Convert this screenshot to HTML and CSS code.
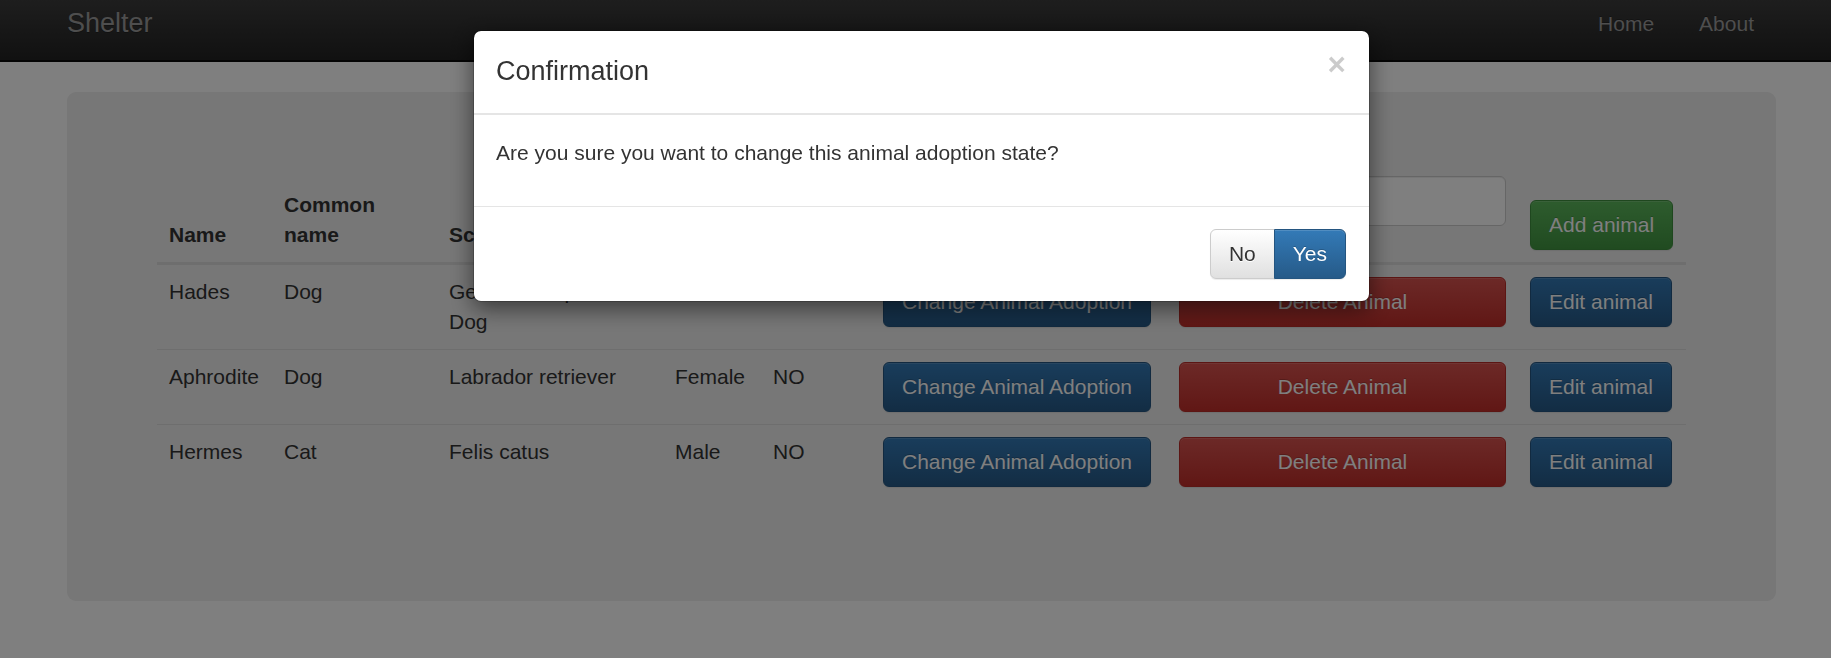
FILE: index.html
```html
<!DOCTYPE html>
<html lang="en">
<head>
<meta charset="utf-8">
<title>Shelter</title>
<link rel="stylesheet" href="styles.css">
</head>
<body>
<nav class="navbar">
  <div class="navbar-inner">
    <a class="brand" href="#">Shelter</a>
    <ul class="nav">
      <li><a href="#">Home</a></li>
      <li><a href="#">About</a></li>
    </ul>
  </div>
</nav>
<main class="container">
  <section class="jumbotron">
    <table class="animals">
      <colgroup>
        <col class="w-name"><col class="w-common"><col class="w-sci"><col class="w-gender"><col class="w-adopted"><col class="w-change"><col class="w-delete"><col class="w-edit">
      </colgroup>
      <thead>
        <tr>
          <th>Name</th>
          <th>Common name</th>
          <th>Scientific name</th>
          <th>Gender</th>
          <th>Adopted</th>
          <th></th>
          <th><input class="search" type="text" placeholder="Search"></th>
          <th><button class="btn btn-success">Add animal</button></th>
        </tr>
      </thead>
      <tbody>
        <tr>
          <td>Hades</td>
          <td>Dog</td>
          <td>German shepherd Dog</td>
          <td>Male</td>
          <td>NO</td>
          <td><button class="btn btn-primary">Change Animal Adoption</button></td>
          <td><button class="btn btn-danger btn-block">Delete Animal</button></td>
          <td><button class="btn btn-primary">Edit animal</button></td>
        </tr>
        <tr>
          <td>Aphrodite</td>
          <td>Dog</td>
          <td>Labrador retriever</td>
          <td>Female</td>
          <td>NO</td>
          <td><button class="btn btn-primary">Change Animal Adoption</button></td>
          <td><button class="btn btn-danger btn-block">Delete Animal</button></td>
          <td><button class="btn btn-primary">Edit animal</button></td>
        </tr>
        <tr>
          <td>Hermes</td>
          <td>Cat</td>
          <td>Felis catus</td>
          <td>Male</td>
          <td>NO</td>
          <td><button class="btn btn-primary">Change Animal Adoption</button></td>
          <td><button class="btn btn-danger btn-block">Delete Animal</button></td>
          <td><button class="btn btn-primary">Edit animal</button></td>
        </tr>
      </tbody>
    </table>
  </section>
</main>

<div class="backdrop"></div>
<div class="modal">
  <div class="modal-dialog">
    <div class="modal-content">
      <div class="modal-header">
        <h4 class="modal-title">Confirmation</h4>
        <button class="close" type="button">&times;</button>
      </div>
      <div class="modal-body">
        <p>Are you sure you want to change this animal adoption state?</p>
      </div>
      <div class="modal-footer">
        <div class="btn-group">
          <button class="btn btn-default">No</button>
          <button class="btn btn-primary">Yes</button>
        </div>
      </div>
    </div>
  </div>
</div>
</body>
</html>
```

FILE: styles.css
```css
* { box-sizing: border-box; }

html, body { margin: 0; padding: 0; }

body {
  font-family: "Liberation Sans", Arial, Helvetica, sans-serif;
  font-size: 21px;
  line-height: 30px;
  color: #333;
  background: #fff;
}

/* Navbar */
.navbar {
  height: 62px;
  background: linear-gradient(to bottom, #3c3c3c 0, #222 100%);
  border-bottom: 2px solid #080808;
  margin-bottom: 30px;
}
.navbar-inner {
  width: 1709px;
  margin-left: 67px;
  padding-top: 8px;
  display: flex;
  justify-content: space-between;
  align-items: flex-start;
}
.brand {
  font-size: 27px;
  line-height: 30px;
  color: #9d9d9d;
  text-decoration: none;
  text-shadow: 0 1px 0 rgba(0,0,0,.25);
}
.nav {
  list-style: none;
  margin: 0;
  padding: 0;
  display: flex;
}
.nav a {
  display: block;
  padding: 1px 22.5px 0;
  line-height: 30px;
  color: #9d9d9d;
  text-decoration: none;
  text-shadow: 0 -1px 0 rgba(0,0,0,.25);
}
.nav li:last-child a { padding-right: 22px; }

/* Page */
.container {
  width: 1709px;
  margin-left: 67px;
}
.jumbotron {
  background: #eee;
  border-radius: 9px;
  padding: 72px 90px;
  margin-bottom: 30px;
}

/* Table */
.animals {
  width: 100%;
  table-layout: fixed;
  border-collapse: separate;
  border-spacing: 0;
  margin-bottom: 30px;
}
.w-name { width: 115px; }
.w-common { width: 165px; }
.w-sci { width: 226px; }
.w-gender { width: 98px; }
.w-adopted { width: 110px; }
.w-change { width: 296px; }
.w-delete { width: 351px; }
.w-edit { width: 168px; }

.animals th,
.animals td {
  padding: 12px;
  text-align: left;
  vertical-align: top;
}
.animals th {
  vertical-align: bottom;
  font-weight: bold;
  border-bottom: 3px solid #ddd;
}
.animals tbody tr + tr td {
  border-top: 1px solid #ddd;
}

.search {
  display: block;
  width: 100%;
  height: 50px;
  margin: 0 0 24px;
  padding: 9px 18px;
  font: inherit;
  color: #555;
  background: #fff;
  border: 1px solid #ccc;
  border-radius: 6px;
  box-shadow: inset 0 1px 1px rgba(0,0,0,.075);
}
.search::placeholder { color: #999; }

/* Buttons */
.btn {
  display: inline-block;
  margin: 0;
  padding: 9px 18px;
  font-family: inherit;
  font-size: 21px;
  font-weight: normal;
  line-height: 30px;
  text-align: center;
  white-space: nowrap;
  vertical-align: middle;
  border: 1px solid transparent;
  border-radius: 6px;
  color: #fff;
  text-shadow: 0 -1px 0 rgba(0,0,0,.2);
  box-shadow: inset 0 1px 0 rgba(255,255,255,.15), 0 1px 1px rgba(0,0,0,.075);
  cursor: pointer;
}
.btn-block {
  display: block;
  width: 100%;
}
.btn-primary {
  background: linear-gradient(to bottom, #337ab7 0, #265a88 100%);
  border-color: #245580;
}
.btn-danger {
  background: linear-gradient(to bottom, #d9534f 0, #c12e2a 100%);
  border-color: #b92c28;
}
.btn-success {
  background: linear-gradient(to bottom, #5cb85c 0, #419641 100%);
  border-color: #3e8f3e;
}
.btn-default {
  color: #333;
  background: linear-gradient(to bottom, #fff 0, #e0e0e0 100%);
  border-color: #ccc;
  text-shadow: 0 1px 0 #fff;
}

.btn-group { display: flex; }
.btn-group .btn:first-child { border-radius: 6px 0 0 6px; }
.btn-group .btn:last-child { border-radius: 0 6px 6px 0; }
.btn-group .btn + .btn { margin-left: -1px; }

/* Modal */
.backdrop {
  position: fixed;
  top: 0;
  right: 0;
  bottom: 0;
  left: 0;
  z-index: 1040;
  background: #000;
  opacity: .5;
}
.modal {
  position: fixed;
  top: 0;
  right: 0;
  bottom: 0;
  left: 0;
  z-index: 1050;
}
.modal-dialog {
  width: 897px;
  margin: 30px 0 0 473px;
}
.modal-content {
  background: #fff;
  background-clip: padding-box;
  border: 1px solid rgba(0,0,0,.2);
  border-radius: 8px;
  box-shadow: 0 7px 22px rgba(0,0,0,.5);
}
.modal-header {
  display: flex;
  justify-content: space-between;
  align-items: flex-start;
  padding: 21px 23px 23px 22px;
  border-bottom: 2px solid #e5e5e5;
}
.modal-title {
  margin: 0;
  font-size: 27px;
  line-height: 38px;
  font-weight: 500;
}
.close {
  margin-top: -3px;
  padding: 0;
  background: none;
  border: 0;
  font-family: inherit;
  font-size: 31.5px;
  font-weight: bold;
  line-height: 1;
  color: #000;
  opacity: .2;
  text-shadow: 0 1px 0 #fff;
  cursor: pointer;
}
.modal-body { padding: 23px 23px 23px 22px; }
.modal-body p { margin: 0 0 15px; }
.modal-footer {
  display: flex;
  justify-content: flex-end;
  padding: 22px 23px;
  border-top: 1px solid #e5e5e5;
}
```
